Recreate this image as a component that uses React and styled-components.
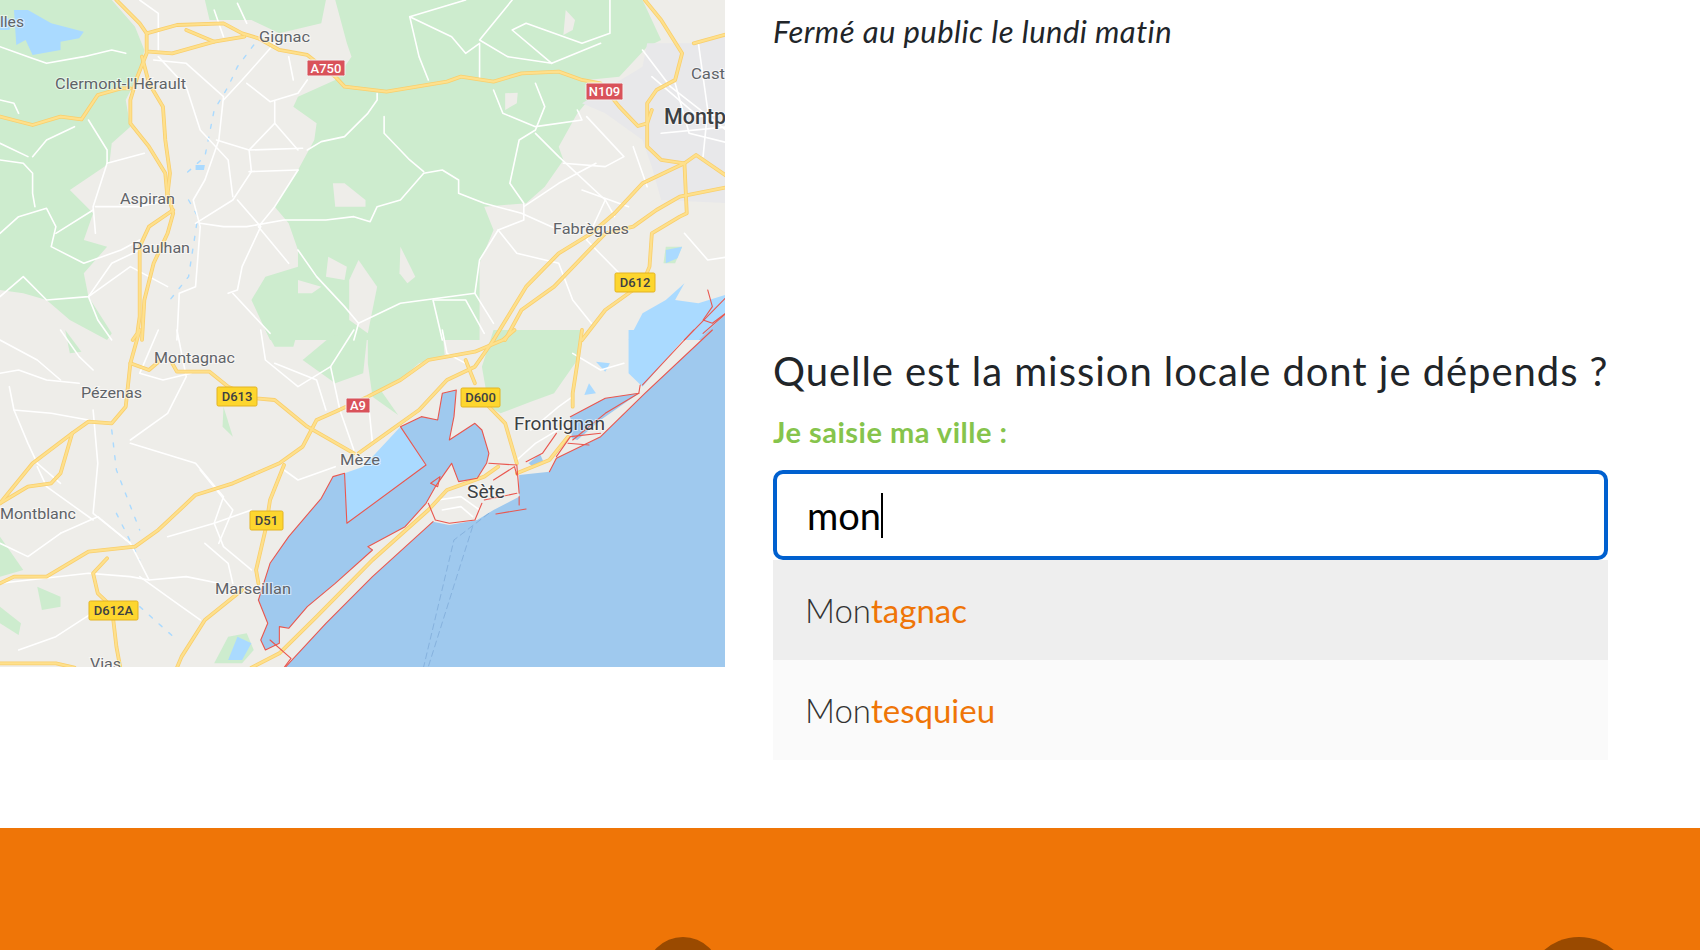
import React from "react";
import styled, { createGlobalStyle } from "styled-components";

const GlobalStyle = createGlobalStyle`
  html, body {
    margin: 0;
    padding: 0;
    height: 950px;
    overflow: hidden;
    background: #fff;
    font-family: "Lato", "Noto Sans", sans-serif;
  }
`;

const Section = styled.section`
  display: grid;
  grid-template-columns: 725px 835px;
  column-gap: 48px;
  height: 828px;
`;

const MapFigure = styled.svg`
  display: block;
  width: 725px;
  height: 667px;
`;

const InfoColumn = styled.div`
  display: flex;
  flex-direction: column;
`;

const Note = styled.p`
  margin: 10px 0 0;
  height: 337px;
  font-size: 31px;
  line-height: 42px;
  font-style: italic;
  letter-spacing: 0.45px;
  color: #212529;
`;

const Heading = styled.h2`
  margin: 0;
  font-size: 40px;
  line-height: 48px;
  font-weight: 400;
  white-space: nowrap;
  letter-spacing: 0.95px;
  color: #212529;
`;

const CityLabel = styled.label`
  display: block;
  margin: 17px 0 18px;
  font-size: 29px;
  line-height: 40px;
  font-weight: 700;
  letter-spacing: 0.5px;
  color: #86c44c;
`;

const CityInput = styled.div`
  box-sizing: border-box;
  display: flex;
  align-items: center;
  height: 90px;
  padding: 0 30px;
  border: 4px solid #0060cf;
  border-radius: 10px;
  font-size: 38px;
  color: #000;
`;

const Caret = styled.span`
  width: 2px;
  height: 45px;
  background: #000;
`;

const SuggestionRow = styled.div`
  display: flex;
  align-items: center;
  height: 100px;
  padding: 0 32px;
  font-size: 33px;
  font-weight: 300;
  color: #333;
  background: ${(p) => (p.$active ? "#eeeeee" : "#fafafa")};
`;

const Match = styled.span`
  color: #ef7507;
  font-weight: 400;
`;

const Footer = styled.footer`
  display: flex;
  align-items: flex-start;
  gap: 806px;
  height: 122px;
  padding: 109px 0 0 646px;
  box-sizing: border-box;
  overflow: hidden;
  background: #ef7507;
`;

const FooterBadge = styled.div`
  flex: none;
  width: ${(p) => p.$size}px;
  height: ${(p) => p.$size}px;
  border-radius: 50%;
  background: #9a4a00;
`;

// traced from the two crops, so the points stay in crop space
const UPPER = "scale(0.4656,0.3333)";
const LOWER = "translate(0,330) scale(0.4656,0.3333)";

const greens = [
  [UPPER, "720,0 745,130 755,170 740,200 720,240 640,290 630,320 680,370 675,420 640,510 590,620 620,670 640,750 640,800 570,830 540,900 580,1020 1030,1020 1030,790 1060,690 1040,620 1130,610 1170,560 1210,480 1200,440 1240,340 1270,290 1260,240 1330,230 1390,140 1420,120 1380,0"],
  [UPPER, "0,0 240,0 290,80 310,150 300,220 270,300 280,380 240,430 235,490 150,570 200,640 180,720 230,740 180,820 190,890 240,1000 230,1020 150,960 100,900 50,880 0,870"],
  [UPPER, "440,0 700,0 690,70 600,100 540,60 450,60"],
  [UPPER, "1430,740 1465,740 1450,790 1425,790"],
  [LOWER, "650,90 710,20 770,0 790,0 780,130 720,160"],
  [LOWER, "790,0 950,0 955,75 900,100 850,160 820,185 855,255 800,200 790,100"],
  [LOWER, "1060,0 1250,0 1240,90 1190,190 1140,215 1075,250 1050,230 1035,110"],
  [LOWER, "570,0 640,0 630,50 590,50"],
  [LOWER, "0,620 50,720 0,740"],
  [LOWER, "80,770 130,800 130,830 90,840"],
  [LOWER, "0,830 45,880 40,915 0,880"],
  [LOWER, "140,0 175,65 150,70"],
  [LOWER, "480,230 500,320 478,290"],
  [LOWER, "460,1000 490,920 530,910 545,960 520,1000"],
];

const lightLand = [
  [UPPER, "715,550 740,550 785,600 785,620 720,620"],
  [UPPER, "860,740 892,830 875,850 858,820"],
  [UPPER, "705,770 745,800 740,840 700,830"],
  [UPPER, "770,780 810,860 790,1000 750,960 750,840"],
  [UPPER, "1085,280 1112,278 1110,310 1085,330"],
  [UPPER, "1215,30 1235,60 1230,90 1210,105"],
  [UPPER, "640,840 690,860 670,880 640,880"],
];

const urban = [
  [UPPER, "1250,310 1380,200 1390,130 1500,130 1557,100 1568,610 1420,600 1400,500 1380,420 1300,340"],
];

const lightWater = [
  [UPPER, "30,30 60,30 110,70 180,95 170,115 130,125 130,150 70,165 55,120 35,135"],
  [UPPER, "0,50 30,60 20,90 0,90"],
  [UPPER, "1430,750 1465,740 1455,775 1430,790"],
  [UPPER, "420,495 440,495 438,510 420,510"],
  [UPPER, "1350,1020 1380,940 1430,900 1470,850 1450,900 1500,910 1568,880 1568,930 1500,1020"],
  [LOWER, "1350,0 1485,0 1380,170 1350,130"],
  [LOWER, "740,430 780,410 860,290 915,405 745,580"],
  [LOWER, "490,990 510,920 540,940 520,990"],
  [LOWER, "1265,160 1280,190 1255,195"],
  [LOWER, "1280,95 1310,100 1300,125"],
];

const sea = [
  [UPPER, "1518,995 1568,930 1568,1020 1500,1020"],
  [LOWER, "612,1013 700,880 800,740 930,575 965,585 1025,570 1060,540 1115,500 1115,435 1180,425 1195,385 1290,320 1385,190 1530,0 1568,0 1568,1013"],
  [LOWER, "555,810 580,700 620,620 690,505 715,440 740,430 745,580 915,405 860,290 905,260 940,270 950,190 980,180 975,260 965,330 1020,280 1035,300 1050,370 1045,400 1025,445 985,455 970,400 935,470 915,520 870,590 790,650 800,660 720,760 660,830 620,895 600,890 600,940 570,960 560,930 575,880"],
  [LOWER, "1225,260 1300,205 1372,190 1290,270 1240,330 1228,325"],
  [LOWER, "1135,400 1160,372 1168,398 1145,410"],
];

const streams = [
  [UPPER, "545,135 510,200 490,260 460,330 440,470 400,520"],
  [UPPER, "405,600 425,650 405,830 365,900"],
  [LOWER, "240,300 250,420 300,600"],
  [LOWER, "250,550 300,690"],
  [LOWER, "300,830 380,930"],
];

const whiteRoads = [
  [UPPER, "0,140 60,170 100,190 180,170 240,150 270,160"],
  [UPPER, "0,300 30,310 40,340"],
  [UPPER, "0,480 50,490 70,520 70,580 75,620"],
  [UPPER, "190,360 230,450 230,490 200,620 205,700"],
  [UPPER, "70,470 100,420 160,380"],
  [UPPER, "0,700 40,650 100,625 120,680 110,740 180,790 260,750 300,720"],
  [UPPER, "330,180 400,190 480,290 470,420 440,540 415,600 430,680 420,860 385,880 380,1020"],
  [UPPER, "590,130 520,240 480,300"],
  [UPPER, "530,250 580,305 640,280 660,240"],
  [UPPER, "590,305 590,370 535,450 540,515 500,600 420,670"],
  [UPPER, "590,370 640,450"],
  [UPPER, "465,420 535,450 650,445"],
  [UPPER, "535,515 640,510"],
  [UPPER, "640,510 590,620 555,680 620,790"],
  [UPPER, "510,600 560,680 520,800 510,870 490,880"],
  [UPPER, "430,670 480,680 530,680 610,660 700,660 760,650 795,665 810,620 860,600 910,520 950,510 985,540 985,580 1040,610 1120,640 1200,690"],
  [UPPER, "660,450 690,425 740,410 790,340 810,300 810,280"],
  [UPPER, "825,350 825,400 880,480 910,515"],
  [UPPER, "880,50 900,170 920,240"],
  [UPPER, "1000,0 880,50 970,110 1000,160 1030,130 1030,240"],
  [UPPER, "1100,0 1030,120 1090,170 1185,190 1100,90 1130,70 1250,130 1310,100 1310,0"],
  [UPPER, "1185,190 1290,130"],
  [UPPER, "1060,270 1080,340 1150,380 1250,360 1240,330"],
  [UPPER, "1150,250 1170,320 1150,390 1115,420 1095,550 1125,610 1125,660 1070,690 1030,780 1020,880"],
  [UPPER, "1150,400 1200,470 1300,600 1320,650"],
  [UPPER, "1125,620 1200,550 1280,490"],
  [UPPER, "1070,690 1110,760 1200,790 1230,900 1270,970"],
  [UPPER, "640,750 680,830 740,920 770,970 860,910 1020,880 1060,970"],
  [UPPER, "770,970 760,1020"],
  [UPPER, "0,890 50,830 100,900 190,890 240,790 300,750"],
  [UPPER, "360,860 280,800 190,890 210,960 240,1020"],
  [UPPER, "500,880 580,1000"],
  [UPPER, "300,0 340,40 340,150"],
  [UPPER, "1300,600 1260,720 1330,820"],
  [UPPER, "1470,700 1520,780 1568,770"],
  [UPPER, "340,170 400,260 430,390 490,480 500,590"],
  [UPPER, "205,620 300,620 360,600"],
  [UPPER, "230,490 310,460"],
  [UPPER, "0,430 60,470"],
  [UPPER, "120,700 200,630"],
  [UPPER, "460,30 480,110"],
  [UPPER, "510,10 530,70"],
  [UPPER, "620,170 630,240"],
  [UPPER, "1380,150 1440,260 1568,400"],
  [UPPER, "1400,230 1500,350 1568,340"],
  [UPPER, "1450,250 1480,400 1568,430"],
  [UPPER, "1420,400 1568,380"],
  [UPPER, "1500,130 1520,330 1510,470"],
  [UPPER, "1260,350 1340,470 1300,500 1210,490"],
  [UPPER, "1360,440 1390,560"],
  [UPPER, "1250,570 1350,620"],
  [UPPER, "1040,1000 1000,900 930,900 950,1020"],
  [LOWER, "0,130 40,120 100,150 170,160"],
  [LOWER, "0,30 80,90 130,150"],
  [LOWER, "130,0 170,80 200,120"],
  [LOWER, "200,240 210,400 200,550 280,640 320,750"],
  [LOWER, "280,330 360,250 400,140 380,0"],
  [LOWER, "280,340 420,400 480,500 460,580 480,650 540,720"],
  [LOWER, "130,610 210,560 280,640"],
  [LOWER, "0,760 190,730 280,740 320,750 400,740 470,760"],
  [LOWER, "360,620 460,580 540,540"],
  [LOWER, "440,640 490,700 500,760"],
  [LOWER, "590,100 680,150 700,240"],
  [LOWER, "560,0 570,90 640,170 710,110 760,0"],
  [LOWER, "710,110 730,240 760,360"],
  [LOWER, "790,200 800,340"],
  [LOWER, "610,420 640,450 720,410"],
  [LOWER, "950,0 960,70 1000,100"],
  [LOWER, "1140,300 1200,230 1230,200"],
  [LOWER, "1110,390 1150,340 1210,290"],
  [LOWER, "940,510 990,500 1030,540"],
  [LOWER, "950,540 990,530 1015,560"],
  [LOWER, "20,170 30,240 60,340 80,400 130,460"],
  [LOWER, "30,240 110,250 190,270"],
  [LOWER, "340,0 300,130 350,150 410,130"],
  [LOWER, "430,420 500,540 470,640"],
  [LOWER, "80,410 100,470 200,570"],
  [LOWER, "0,640 60,680 130,610"],
  [LOWER, "230,820 120,920 40,960"],
  [LOWER, "300,740 380,820 430,870"],
  [LOWER, "1230,70 1290,120 1340,100"],
];

const highways = [
  [UPPER, "250,0 300,70 315,100 315,160 295,230 280,300 280,370 320,440 355,520 360,600"],
  [UPPER, "305,170 320,250 350,320 355,420 365,520 360,580 372,640 360,700 330,790 310,900 305,1020"],
  [UPPER, "372,630 320,680 300,740 300,950 295,1000 285,1020"],
  [UPPER, "315,100 380,75 480,70 520,100 555,115 600,150 660,165 720,230 740,260 830,275 960,245 990,230 1060,245 1120,220 1200,215 1250,240 1290,250 1330,320 1370,378 1390,370 1400,330"],
  [UPPER, "400,90 460,125 525,110"],
  [UPPER, "320,155 370,160 460,125"],
  [UPPER, "0,350 70,375 130,350 175,358 210,285 260,265 280,265"],
  [UPPER, "1385,0 1420,60 1465,160 1450,240 1410,270 1390,310 1390,440 1420,480 1470,490 1495,465 1568,535"],
  [UPPER, "1470,490 1475,640 1460,650 1400,700 1395,800 1380,850 1300,930 1250,1020"],
  [UPPER, "1568,560 1460,590 1410,630 1360,680 1300,700 1190,860 1120,930 1085,1020"],
  [UPPER, "1470,490 1380,550 1320,640 1270,700 1200,760 1130,860 1060,1020"],
  [UPPER, "1490,130 1568,100"],
  [LOWER, "0,520 60,470 110,460 130,430 155,310 190,275 240,280 270,230 280,100 300,0"],
  [LOWER, "0,520 70,400 155,310"],
  [LOWER, "0,760 30,740 100,740 190,665 290,650 340,600 420,495 500,460 600,400 650,350 680,270 720,245 790,200 860,150 920,90 1020,65 1080,30 1105,0"],
  [LOWER, "370,100 380,125 450,125 490,170 550,205 590,210 660,290 760,370"],
  [LOWER, "770,370 830,310 900,240 960,150 1020,110 1060,30"],
  [LOWER, "610,405 580,510 570,600 550,720 555,760"],
  [LOWER, "520,780 440,870 390,980 380,1013"],
  [LOWER, "230,685 200,730 210,790 240,830 250,950 258,1010"],
  [LOWER, "540,1013 600,970 680,860 800,690 920,540 960,480 1040,440 1070,410"],
  [LOWER, "1000,90 1020,160"],
  [LOWER, "1050,230 1085,280 1110,400"],
  [LOWER, "1250,0 1240,100 1230,190 1230,230"],
  [LOWER, "1110,430 1180,390 1220,320"],
  [LOWER, "0,1000 120,1000 160,1013"],
  [LOWER, "280,100 320,120 345,90"],
];

const boundaries = [
  [UPPER, "1470,1020 1568,880"],
  [UPPER, "1510,1000 1568,930"],
  [UPPER, "1520,870 1530,920 1510,960 1530,970 1568,930"],
  [LOWER, "612,1013 700,880 800,740 930,575"],
  [LOWER, "1180,425 1195,385 1290,320 1385,190 1530,0"],
  [LOWER, "1380,165 1490,0"],
  [LOWER, "555,810 580,700 620,620 690,505 715,440 740,430 745,580 915,405 860,290 905,260 940,270 950,190 980,180 975,260 965,330 1020,280 1035,300 1050,370 1045,400 1025,445 985,455 970,400 935,470 915,520 870,590 790,650 800,660 720,760 660,830 620,895 600,890 600,940 570,960 560,930 575,880 555,810"],
  [LOWER, "920,520 935,570 965,580 1020,570 1035,520"],
  [LOWER, "1050,400 1110,405 1115,490"],
  [LOWER, "1130,395 1165,370 1195,310"],
  [LOWER, "1065,552 1130,537"],
  [LOWER, "1115,500 1115,525"],
  [LOWER, "1040,510 1110,490"],
  [LOWER, "925,460 945,440 940,470 925,460"],
  [LOWER, "1195,380 1225,320 1290,310"],
  [LOWER, "1220,340 1265,345"],
  [LOWER, "580,930 625,985 610,1013"],
  [LOWER, "1225,260 1300,205 1372,190 1375,165"],
  [LOWER, "1230,330 1300,250 1372,190"],
  [LOWER, "1110,435 1105,410 1060,450"],
];

const channels = [
  [LOWER, "1050,550 975,630 910,1010"],
  [LOWER, "1015,590 920,1010"],
];

const labels = [
  { text: "lles", x: 0, y: 27, w: 24, size: 15 },
  { text: "Gignac", x: 259, y: 42, w: 51, size: 15 },
  { text: "Clermont-l'Hérault", x: 55, y: 89, w: 131, size: 15 },
  { text: "Cast", x: 691, y: 79, w: 34, size: 15 },
  { text: "Montp", x: 664, y: 124, w: 62, size: 22, fill: "#3c4043", weight: 500 },
  { text: "Aspiran", x: 120, y: 204, w: 55, size: 15 },
  { text: "Paulhan", x: 132, y: 253, w: 58, size: 15 },
  { text: "Fabrègues", x: 553, y: 234, w: 76, size: 15 },
  { text: "Montagnac", x: 154, y: 363, w: 81, size: 15 },
  { text: "Pézenas", x: 81, y: 398, w: 61, size: 15 },
  { text: "Mèze", x: 340, y: 465, w: 40, size: 15 },
  { text: "Frontignan", x: 514, y: 430, w: 91, size: 18, fill: "#3c4043" },
  { text: "Sète", x: 467, y: 498, w: 38, size: 18, fill: "#3c4043" },
  { text: "Montblanc", x: 0, y: 519, w: 76, size: 15 },
  { text: "Marseillan", x: 215, y: 594, w: 76, size: 15 },
  { text: "Vias", x: 90, y: 669, w: 31, size: 15 },
];

const shields = [
  { text: "A750", x: 307, y: 60, w: 38, h: 16, red: true },
  { text: "N109", x: 586, y: 83, w: 37, h: 17, red: true },
  { text: "A9", x: 346, y: 398, w: 24, h: 15, red: true },
  { text: "D612", x: 615, y: 273, w: 40, h: 19 },
  { text: "D613", x: 217, y: 387, w: 40, h: 19 },
  { text: "D600", x: 461, y: 388, w: 39, h: 19 },
  { text: "D51", x: 250, y: 511, w: 33, h: 19 },
  { text: "D612A", x: 89, y: 601, w: 49, h: 19 },
];

const Lines = ({ items, color, width, dash }) =>
  items.map(([transform, points], i) => (
    <polyline
      key={i}
      transform={transform}
      points={points}
      fill="none"
      stroke={color}
      strokeWidth={width}
      strokeDasharray={dash}
      strokeLinejoin="round"
      strokeLinecap="round"
      vectorEffect="non-scaling-stroke"
    />
  ));

const Areas = ({ items, color }) =>
  items.map(([transform, points], i) => (
    <polygon key={i} transform={transform} points={points} fill={color} />
  ));

const MapImage = () => (
  <MapFigure viewBox="0 0 725 667" role="img" aria-label="Carte">
    <rect width="725" height="667" fill="#eeede9" />
    <Areas items={greens} color="#cdecce" />
    <Areas items={lightLand} color="#eeede9" />
    <Areas items={urban} color="#e8e8ea" />
    <Areas items={lightWater} color="#aadaff" />
    <Areas items={sea} color="#9fc9ee" />
    <Lines items={streams} color="#aadaff" width={1.4} dash="4 9" />
    <Lines items={whiteRoads} color="#ffffff" width={1.6} />
    <Lines items={channels} color="#86b2de" width={1} dash="6 4" />
    <Lines items={highways} color="#f9cf6d" width={3.8} />
    <Lines items={highways} color="#fee08c" width={2.2} />
    <Lines items={boundaries} color="#e9574f" width={1.1} />
    {labels.map((l) => (
      <text
        key={l.text}
        x={l.x}
        y={l.y}
        textLength={l.w}
        lengthAdjust="spacingAndGlyphs"
        fontFamily="Roboto, sans-serif"
        fontSize={l.size}
        fontWeight={l.weight || 400}
        fill={l.fill || "#5f6368"}
        stroke="#ffffff"
        strokeOpacity="0.55"
        strokeWidth="2"
        paintOrder="stroke"
      >
        {l.text}
      </text>
    ))}
    {shields.map((s) => (
      <g key={s.text}>
        <rect
          x={s.x}
          y={s.y}
          width={s.w}
          height={s.h}
          rx="1.5"
          fill={s.red ? "#d9525a" : "#fdd62e"}
          stroke={s.red ? "#f2f2f2" : "#e3b322"}
          strokeWidth="1"
        />
        <text
          x={s.x + s.w / 2}
          y={s.y + s.h / 2 + 4.5}
          textAnchor="middle"
          fontFamily="Roboto, sans-serif"
          fontSize="13"
          fontWeight="500"
          fill={s.red ? "#ffffff" : "#3c4043"}
        >
          {s.text}
        </text>
      </g>
    ))}
  </MapFigure>
);

export default function App() {
  return (
    <>
      <GlobalStyle />
      <Section>
        <MapImage />
        <InfoColumn>
          <Note>Fermé au public le lundi matin</Note>
          <Heading>Quelle est la mission locale dont je dépends ?</Heading>
          <CityLabel>Je saisie ma ville :</CityLabel>
          <CityInput>
            mon
            <Caret />
          </CityInput>
          <SuggestionRow $active>
            Mon<Match>tagnac</Match>
          </SuggestionRow>
          <SuggestionRow>
            Mon<Match>tesquieu</Match>
          </SuggestionRow>
        </InfoColumn>
      </Section>
      <Footer>
        <FooterBadge $size={74} />
        <FooterBadge $size={106} />
      </Footer>
    </>
  );
}
